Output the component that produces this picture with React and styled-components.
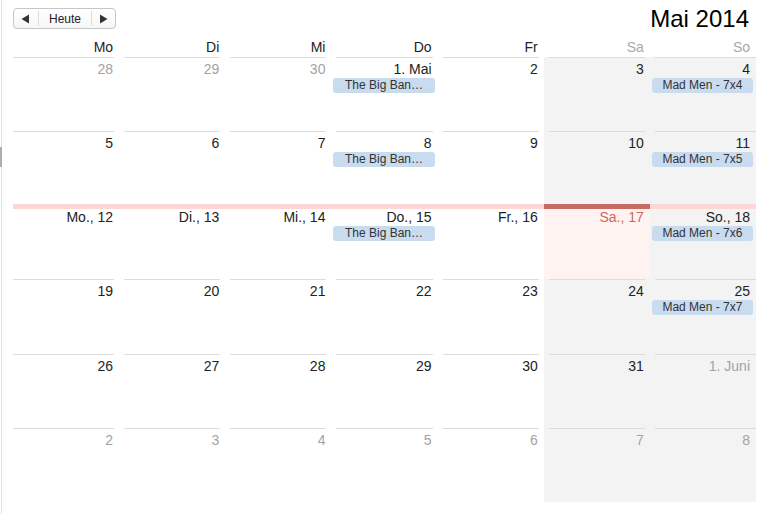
import React from 'react';
import styled, { createGlobalStyle } from 'styled-components';

const Global = createGlobalStyle`
  html, body { margin: 0; padding: 0; background: #fff; }
  body { font-family: "Liberation Sans", Arial, Helvetica, sans-serif; color: #222; }
`;

const Frame = styled.div`
  position: relative;
  box-sizing: border-box;
  width: 767px;
  height: 514px;
  margin-left: 1px;
  border-left: 1px solid #e2e2e2;
  padding: 0 12px 0 11px;
  display: flex;
  flex-direction: column;
`;

const Grip = styled.div`
  position: absolute;
  left: -2px;
  top: 147px;
  width: 2px;
  height: 20px;
  background: #a8afb7;
`;

const Toolbar = styled.div`
  height: 36px;
  display: flex;
  justify-content: space-between;
  align-items: flex-start;
`;

const ButtonGroup = styled.div`
  margin-top: 8px;
  box-sizing: border-box;
  height: 21px;
  width: 103px;
  display: flex;
  align-items: stretch;
  border: 1px solid #c6c6c6;
  border-radius: 4px;
  background: linear-gradient(#ffffff, #f6f6f6);
`;

const Segment = styled.button`
  all: unset;
  box-sizing: border-box;
  width: ${(p) => p.$w}px;
  display: flex;
  align-items: center;
  justify-content: center;
  font-family: "Liberation Sans", Arial, sans-serif;
  font-size: 12px;
  color: #222;
`;

const Divider = styled.span`
  width: 1px;
  margin: 2px 0;
  background: #dcdcdc;
`;

const Title = styled.h1`
  margin: 5px 7px 0 0;
  font-size: 24px;
  line-height: 28px;
  font-weight: normal;
  color: #000;
`;

const WeekdayRow = styled.div`
  height: 21px;
  display: grid;
  grid-template-columns: repeat(7, 1fr);
`;

const WeekdayLabel = styled.div`
  text-align: right;
  padding: 3px 6px 0 0;
  font-size: 14px;
  line-height: 16px;
  color: ${(p) => (p.$weekend ? '#a9a9a9' : '#222')};
`;

const MonthGrid = styled.div`
  height: 445px;
  display: grid;
  grid-template-columns: repeat(7, 1fr);
  grid-template-rows: repeat(6, 1fr);
`;

const Cell = styled.div`
  min-width: 0;
  display: flex;
  flex-direction: column;
  background: ${(p) => (p.$today ? '#fff3f2' : p.$weekend ? '#f3f3f3' : 'transparent')};
`;

const Rule = styled.div`
  flex: none;
  height: 1px;
  margin: 0 ${(p) => (p.$last ? 0 : 5)}px 0 ${(p) => (p.$first ? 0 : 5)}px;
  background: #dcdcdc;
`;

const WeekBar = styled.div`
  flex: none;
  height: 5px;
  margin: -1px 0 -3px 0;
  background: ${(p) => (p.$today ? '#c96a65' : '#fdd6d6')};
`;

const DayNum = styled.div`
  text-align: right;
  padding: 3px 6px 0 0;
  height: 17px;
  font-size: 14px;
  line-height: 16px;
  white-space: nowrap;
  color: ${(p) => (p.$today ? '#cf6760' : p.$muted ? '#a3a3a3' : '#222')};
`;

const Chip = styled.div`
  margin: 0 3px 0 2px;
  height: 15px;
  line-height: 15px;
  border-radius: 3px;
  background: #c9dcef;
  color: #333;
  font-size: 12px;
  text-align: center;
  white-space: nowrap;
  overflow: hidden;
`;

const Triangle = ({ dir }) => (
  <svg width="9" height="10" viewBox="0 0 9 10">
    {dir === 'left' ? (
      <polygon points="8,0.5 8,9.5 0.5,5" fill="#333" />
    ) : (
      <polygon points="1,0.5 1,9.5 8.5,5" fill="#333" />
    )}
  </svg>
);

const dayNames = ['Mo', 'Di', 'Mi', 'Do', 'Fr', 'Sa', 'So'];
const BBT = 'The Big Ban…';

const weeks = [
  [
    { l: '28', m: true }, { l: '29', m: true }, { l: '30', m: true },
    { l: '1. Mai', e: BBT }, { l: '2' }, { l: '3' }, { l: '4', e: 'Mad Men - 7x4' },
  ],
  [
    { l: '5' }, { l: '6' }, { l: '7' }, { l: '8', e: BBT }, { l: '9' }, { l: '10' },
    { l: '11', e: 'Mad Men - 7x5' },
  ],
  [
    { l: 'Mo., 12' }, { l: 'Di., 13' }, { l: 'Mi., 14' }, { l: 'Do., 15', e: BBT },
    { l: 'Fr., 16' }, { l: 'Sa., 17', t: true }, { l: 'So., 18', e: 'Mad Men - 7x6' },
  ],
  [
    { l: '19' }, { l: '20' }, { l: '21' }, { l: '22' }, { l: '23' }, { l: '24' },
    { l: '25', e: 'Mad Men - 7x7' },
  ],
  [
    { l: '26' }, { l: '27' }, { l: '28' }, { l: '29' }, { l: '30' }, { l: '31' },
    { l: '1. Juni', m: true },
  ],
  [
    { l: '2', m: true }, { l: '3', m: true }, { l: '4', m: true }, { l: '5', m: true },
    { l: '6', m: true }, { l: '7', m: true }, { l: '8', m: true },
  ],
];

const currentWeek = 2;

export default function App() {
  return (
    <>
      <Global />
      <Frame>
        <Grip />
        <Toolbar>
          <ButtonGroup>
            <Segment $w={24}><Triangle dir="left" /></Segment>
            <Divider />
            <Segment $w={53}>Heute</Segment>
            <Divider />
            <Segment $w={23}><Triangle dir="right" /></Segment>
          </ButtonGroup>
          <Title>Mai 2014</Title>
        </Toolbar>
        <WeekdayRow>
          {dayNames.map((d, i) => (
            <WeekdayLabel key={d} $weekend={i >= 5}>{d}</WeekdayLabel>
          ))}
        </WeekdayRow>
        <MonthGrid>
          {weeks.map((week, wi) =>
            week.map((day, di) => (
              <Cell key={`${wi}-${di}`} $weekend={di >= 5} $today={day.t}>
                {wi === currentWeek ? (
                  <WeekBar $today={day.t} />
                ) : (
                  <Rule $first={di === 0} $last={di === 6} />
                )}
                <DayNum $muted={day.m} $today={day.t}>{day.l}</DayNum>
                {day.e && <Chip>{day.e}</Chip>}
              </Cell>
            ))
          )}
        </MonthGrid>
      </Frame>
    </>
  );
}
